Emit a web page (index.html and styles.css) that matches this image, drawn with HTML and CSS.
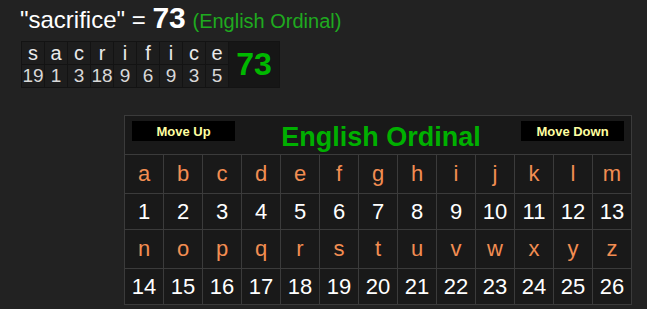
FILE: index.html
```html
<!DOCTYPE html>
<html lang="en">

<head>
    <meta charset="UTF-8">
    <meta name="viewport" content="width=device-width, initial-scale=1.0">
    <title>sacrifice - English Ordinal</title>
    <link rel="stylesheet" href="styles.css">
</head>

<body>

    <div class="page">
        <div class="result">
            "sacrifice" = <b class="total">73</b> <span class="cipher-name">(English Ordinal)</span>
        </div>

        <div class="breakdown">
            <span class="ch">s</span><span class="ch">a</span><span class="ch">c</span><span class="ch">r</span><span class="ch">i</span><span class="ch">f</span><span class="ch">i</span><span class="ch">c</span><span class="ch">e</span>
            <span class="num">19</span><span class="num">1</span><span class="num">3</span><span class="num">18</span><span class="num">9</span><span class="num">6</span><span class="num">9</span><span class="num">3</span><span class="num">5</span>
            <span class="sum">73</span>
        </div>

        <div class="chart">
            <div class="chart-head">
                <button class="move">Move Up</button>
                <h2>English Ordinal</h2>
                <button class="move">Move Down</button>
            </div>
            <div class="chart-grid">
                <span class="k">a</span><span class="k">b</span><span class="k">c</span><span class="k">d</span><span class="k">e</span><span class="k">f</span><span class="k">g</span><span class="k">h</span><span class="k">i</span><span class="k">j</span><span class="k">k</span><span class="k">l</span><span class="k">m</span>
                <span class="v">1</span><span class="v">2</span><span class="v">3</span><span class="v">4</span><span class="v">5</span><span class="v">6</span><span class="v">7</span><span class="v">8</span><span class="v">9</span><span class="v">10</span><span class="v">11</span><span class="v">12</span><span class="v">13</span>
                <span class="k">n</span><span class="k">o</span><span class="k">p</span><span class="k">q</span><span class="k">r</span><span class="k">s</span><span class="k">t</span><span class="k">u</span><span class="k">v</span><span class="k">w</span><span class="k">x</span><span class="k">y</span><span class="k">z</span>
                <span class="v">14</span><span class="v">15</span><span class="v">16</span><span class="v">17</span><span class="v">18</span><span class="v">19</span><span class="v">20</span><span class="v">21</span><span class="v">22</span><span class="v">23</span><span class="v">24</span><span class="v">25</span><span class="v">26</span>
            </div>
        </div>
    </div>

</body>

</html>
```

FILE: styles.css
```css
html,
body {
    margin: 0;
    background: #222;
}

body {
    font-family: "Liberation Sans", Arial, sans-serif;
    color: #fff;
}

.page {
    padding: 3px 0 0 20px;
}

/* top line: word = value (cipher) */
.result {
    font-size: 24px;
    line-height: 30px;
    color: #fff;
    white-space: nowrap;
}

.total {
    font-size: 30px;
}

.cipher-name {
    font-size: 20px;
    color: #1faa1f;
}

/* letter by letter breakdown */
.breakdown {
    display: inline-grid;
    grid-template-columns: repeat(9, 22px) 50px;
    grid-template-rows: 22px 22px;
    gap: 1px;
    padding: 1px;
    margin: 5px 0 0 1px;
    background: #131313;
    font-size: 19px;
}

.breakdown span {
    display: flex;
    align-items: center;
    justify-content: center;
    background: #1d1d1d;
}

.breakdown .ch {
    color: #eaeaea;
    font-size: 20px;
}

.breakdown .num {
    color: #d8d8d8;
}

.breakdown .sum {
    grid-column: 10;
    grid-row: 1 / span 2;
    background: #161616;
    color: #00b800;
    font-weight: bold;
    font-size: 32px;
}

/* cipher chart */
.chart {
    width: 506px;
    margin: 27px 0 0 104px;
    border: 1px solid #3b3b3b;
    background: #191919;
}

.chart-head {
    display: flex;
    justify-content: space-between;
    align-items: flex-start;
    height: 39px;
    padding: 5px 7px 0 7px;
    box-sizing: border-box;
    border-bottom: 1px solid #3b3b3b;
}

.chart-head h2 {
    margin: 0;
    font-size: 27px;
    line-height: 32px;
    color: #00b000;
    margin-left: 6px;
}

.move {
    width: 103px;
    height: 20px;
    border: none;
    padding: 0;
    background: #000;
    color: #ffffa0;
    font-family: "Liberation Sans", Arial, sans-serif;
    font-weight: bold;
    font-size: 13px;
}

.chart-grid {
    display: grid;
    grid-template-columns: repeat(13, 38px);
    grid-template-rows: 38px 35px 38px 35px;
    gap: 1px;
    background: #3b3b3b;
    font-size: 22px;
}

.chart-grid span {
    display: flex;
    align-items: center;
    justify-content: center;
    background: #191919;
}

.chart-grid .k {
    color: #f28d52;
}

.chart-grid .v {
    color: #fff;
}
```
